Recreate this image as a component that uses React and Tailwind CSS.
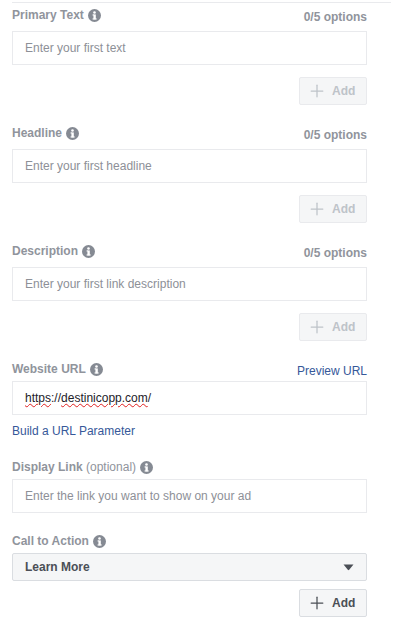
import { Plus } from 'lucide-react';

function InfoIcon() {
  return (
    <svg width="13" height="13" viewBox="0 0 12 12" className="shrink-0">
      <circle cx="6" cy="6" r="6" fill="#858a93" />
      <rect x="5" y="5" width="2.2" height="4.6" fill="#fff" />
      <rect x="4.2" y="5" width="1.4" height="1" fill="#fff" />
      <rect x="4.2" y="8.7" width="3.8" height="1" fill="#fff" />
      <circle cx="6" cy="3.2" r="1.2" fill="#fff" />
    </svg>
  );
}

function Label({ text, optional }) {
  return (
    <div className="flex items-center gap-1 text-xs font-bold text-[#90949c]">
      <span>
        {text}
        {optional && <span className="font-normal"> (optional)</span>}
      </span>
      <InfoIcon />
    </div>
  );
}

function TextBox({ placeholder, value }) {
  return (
    <div className="h-[34px] border border-[#e9eaed] bg-white pl-3 flex items-center text-xs">
      {value ? (
        <span className="text-[#1d2129]">
          <span className="underline decoration-wavy decoration-[#e02020] decoration-1">https</span>
          ://
          <span className="underline decoration-wavy decoration-[#e02020] decoration-1">destinicopp.com</span>
          /
        </span>
      ) : (
        <span className="text-[#8d9097]">{placeholder}</span>
      )}
    </div>
  );
}

function AddButton({ disabled }) {
  return (
    <div className="flex justify-end">
      <button
        className={
          disabled
            ? 'h-7 w-[68px] pl-[7px] flex items-center gap-[5px] border border-[#e9eaed] rounded-[2px] bg-[#f5f6f7] text-xs font-bold text-[#bec3c9]'
            : 'h-7 w-[68px] pl-[7px] flex items-center gap-[5px] border border-[#dadde1] rounded-[2px] bg-[#f5f6f7] text-xs font-bold text-[#4b4f56]'
        }
      >
        <Plus size={20} strokeWidth={1.5} />
        Add
      </button>
    </div>
  );
}

function OptionField({ label, placeholder }) {
  return (
    <div className="h-[118px]">
      <div className="h-[24px] flex items-center justify-between">
        <Label text={label} />
        <span className="text-xs font-bold text-[#90949c] mt-1">0/5 options</span>
      </div>
      <div className="mt-[4px] mb-3">
        <TextBox placeholder={placeholder} />
      </div>
      <AddButton disabled />
    </div>
  );
}

export default function App() {
  return (
    <div className="w-[406px] h-[631px] bg-white overflow-hidden font-['Liberation_Sans',Arial,sans-serif]">
      <div className="ml-3 w-[379px] mt-[2px] border-t border-[#e9eaed]" />
      <div className="w-[355px] ml-3">
        <OptionField label="Primary Text" placeholder="Enter your first text" />
        <OptionField label="Headline" placeholder="Enter your first headline" />
        <OptionField label="Description" placeholder="Enter your first link description" />

        <div className="h-5 pt-1 flex items-center justify-between">
          <Label text="Website URL" />
          <a className="text-xs text-[#365899] mt-[3px]">Preview URL</a>
        </div>
        <div className="mt-[4px]">
          <TextBox value />
        </div>
        <a className="block mt-[9px] text-xs leading-[14px] text-[#365899]">Build a URL Parameter</a>

        <div className="mt-[21px]">
          <Label text="Display Link" optional />
        </div>
        <div className="mt-[4px]">
          <TextBox placeholder="Enter the link you want to show on your ad" />
        </div>

        <div className="mt-5">
          <Label text="Call to Action" />
        </div>
        <div className="mt-[4px] mb-2 h-7 border border-[#dadde1] rounded-[2px] bg-[#f5f6f7] pl-3 pr-[12px] flex items-center justify-between text-xs font-bold text-[#4b4f56]">
          <span>Learn More</span>
          <svg width="11" height="7" viewBox="0 0 11 7">
            <path d="M0.5 0.5H10.5L6.2 5.8Q5.5 6.6 4.8 5.8Z" fill="#4b4f56" />
          </svg>
        </div>
        <AddButton />
      </div>
    </div>
  );
}
